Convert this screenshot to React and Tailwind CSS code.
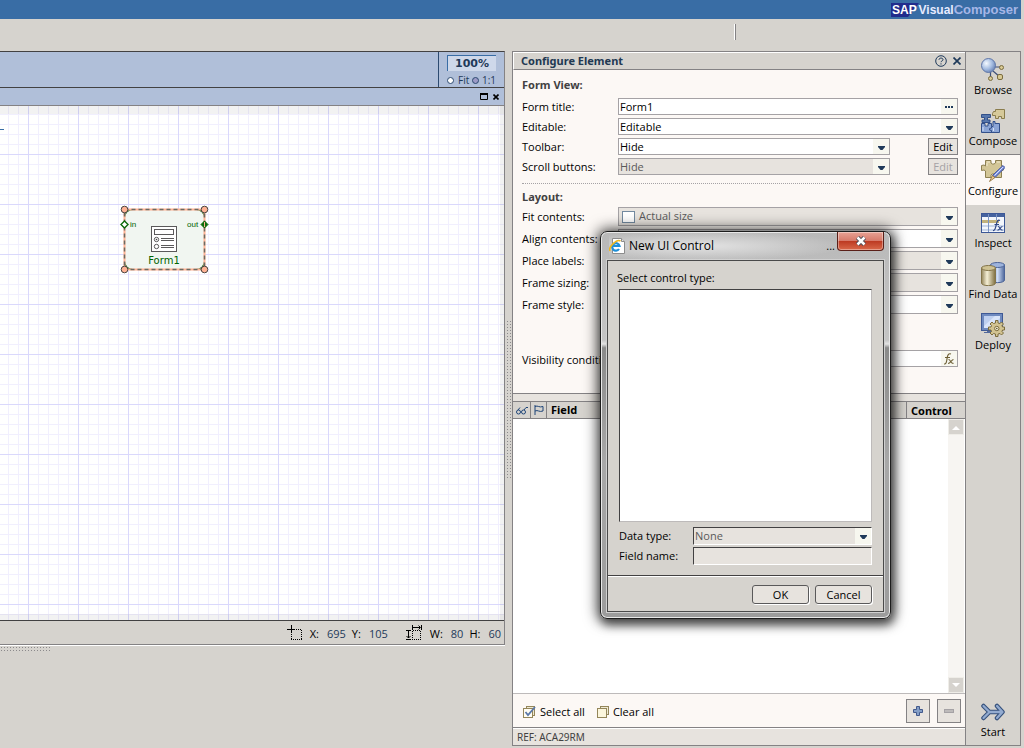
import React, { useState } from "react";
import clsx from "clsx";

const ArrowDown = () => (
  <svg width="7" height="4" viewBox="0 0 7 4" aria-hidden="true">
    <path d="M0 0H7V1L4.500 4H2.500L0 1Z" fill="#1f3a5a" />
  </svg>
);

const BrowseIcon = () => (
  <svg width="24" height="24" viewBox="0 0 24 24" aria-hidden="true">
    <defs>
      <radialGradient id="ball" cx="0.35" cy="0.35" r="0.7">
        <stop offset="0" stopColor="#f4f9ff" />
        <stop offset="0.6" stopColor="#a3bbe0" />
        <stop offset="1" stopColor="#6a83b5" />
      </radialGradient>
    </defs>
    <path d="M14 9H20M12 13L19 19M9.500 14V20" stroke="#3d4f78" strokeWidth="1.200" fill="none" />
    <circle cx="7.500" cy="7.500" r="7" fill="url(#ball)" stroke="#6077a8" />
    <circle cx="20.500" cy="9.500" r="2" fill="#d8c994" stroke="#7a6c3e" />
    <circle cx="9.500" cy="20.500" r="2" fill="#d8c994" stroke="#7a6c3e" />
    <rect x="16.500" y="16.500" width="5" height="5" rx="1.500" fill="#d8c994" stroke="#7a6c3e" />
  </svg>
);

const ComposeIcon = () => (
  <svg width="24" height="24" viewBox="0 0 24 24" aria-hidden="true">
    <path d="M12.500 2.500H14.500V0.500H23.500V9.500H20.500V7.500H17.500V9.500H14.500V6.500H11.500V4.500Z" fill="#d6c99a" stroke="#8a7c4c" />
    <path d="M0.500 5.500H9.500V8.500H6.500V11H9V13.500H1V11H3.500V8.500H0.500Z" fill="#5777ad" stroke="#33508a" />
    <path d="M0.500 14.500H4V17H7V14.500H10.500V17.500H12V12.500H14V14.500H18.500V23.500H0.500Z" fill="#8ba5d6" stroke="#33508a" />
    <path d="M10.500 17.500V19L8.500 19.500V21L10.500 21.500V23.500" fill="none" stroke="#33508a" />
    <path d="M2 18V22M12.500 19V22" stroke="#d6e2f8" />
  </svg>
);

const ConfigureIcon = () => (
  <svg width="24" height="24" viewBox="0 0 24 24" aria-hidden="true">
    <path
      d="M4.500 1.500H10V4L11.500 5H13L14.500 4V1.500H20.500V7L22.500 8V11L20.500 12V18.500H14.500V16L13 15H11L10 16V18.500H4.500V12L3 11L0.500 11.500V6.500L3 6L4.500 7Z"
      fill="#d3c697"
      stroke="#8d8052"
    />
    <path d="M6 3H9M16 3H19M6 4V7" stroke="#f2ead0" />
    <path d="M22 6.500L24 8.500L14 18.500L11.500 16.500Z" fill="#7f95e0" stroke="#3f50a0" />
    <path d="M22 8L13.500 16.500" stroke="#d7e0ff" />
    <path d="M11.500 16.500L14 18.500L8.500 22.500Z" fill="#ecc98a" stroke="#8a6a35" strokeWidth="0.800" />
  </svg>
);

const InspectIcon = () => (
  <svg width="24" height="20" viewBox="0 0 24 20" aria-hidden="true">
    <rect x="0.500" y="0.500" width="23" height="19" fill="#f3f6fc" stroke="#3c5796" />
    <rect x="1" y="1" width="22" height="3" fill="#45629f" />
    <rect x="1" y="7" width="17" height="3" fill="#c2b27c" />
    <rect x="1" y="12" width="22" height="2" fill="#c9d5ea" />
    <rect x="1" y="16" width="22" height="2" fill="#c9d5ea" />
    <path d="M7.500 1V19M15.500 1V7" stroke="#7d95c4" />
    <path d="M12 17.500C14.500 18 14.500 14 15.500 11C16 8 17 6.500 19 7.500M13.500 11.500H18M17 13.500C19 13.500 19 17.500 21.500 17M21.500 13.500C19.500 13.500 19 17.500 16.500 17" stroke="#2f4686" strokeWidth="1.200" fill="none" />
  </svg>
);

const FindDataIcon = () => (
  <svg width="24" height="24" viewBox="0 0 24 24" aria-hidden="true">
    <defs>
      <linearGradient id="blueCan">
        <stop offset="0" stopColor="#7189b8" />
        <stop offset="0.5" stopColor="#cfddf5" />
        <stop offset="1" stopColor="#4d669b" />
      </linearGradient>
      <linearGradient id="tanCan">
        <stop offset="0" stopColor="#93845a" />
        <stop offset="0.4" stopColor="#f5efd6" />
        <stop offset="1" stopColor="#7d6d3e" />
      </linearGradient>
    </defs>
    <path d="M9.500 3V18C9.500 21.500 23.500 21.500 23.500 18V3Z" fill="url(#blueCan)" stroke="#4d6498" />
    <ellipse cx="16.500" cy="3" rx="7" ry="2.500" fill="#9db3dc" stroke="#4d6498" />
    <path d="M0.500 6V21C0.500 24.500 14.500 24.500 14.500 21V6Z" fill="url(#tanCan)" stroke="#83744a" />
    <ellipse cx="7.500" cy="6" rx="7" ry="2.500" fill="#cfc293" stroke="#83744a" />
  </svg>
);

const DeployIcon = () => (
  <svg width="24" height="24" viewBox="0 0 24 24" aria-hidden="true">
    <rect x="0.500" y="0.500" width="21" height="17" fill="#6f8abf" stroke="#3f5995" />
    <rect x="3" y="3" width="16" height="12" fill="#bfd0f0" />
    <path d="M3 13L14 3H19V5L9 15H3Z" fill="#dae5fa" />
    <path d="M6 18H13V20H3V19H6Z" fill="#53699c" />
    <g stroke="#7c6c3c" fill="#d2c391">
      <path d="M14.500 7.500H17V10L19 10.500L20.500 9L22.500 11L21 12.500L21.500 14H23.500V17H21.500L21 18.500L22.500 20L20.500 22L19 20.500L17 21V23.500H14.500V21L12.500 20.500L11 22L9 20L10.500 18.500L10 17H7.500V14H10L10.500 12.500L9 11L11 9L12.500 10.500L14.500 10Z" />
      <circle cx="15.800" cy="15.500" r="2.200" fill="#f0ead0" />
    </g>
    <circle cx="15.800" cy="15.500" r="0.800" fill="#5b5030" />
  </svg>
);

const StartIcon = () => (
  <svg width="24" height="18" viewBox="0 0 24 18" aria-hidden="true">
    <g fill="none" strokeLinecap="round" strokeLinejoin="round">
      <path d="M2.500 3L8.500 9L2.500 15M8.500 9H21M16 3L21.500 9L16 15" stroke="#36517c" strokeWidth="4.500" />
      <path d="M2.500 3L8.500 9L2.500 15M8.500 9H21M16 3L21.500 9L16 15" stroke="#93abd0" strokeWidth="2.300" />
    </g>
  </svg>
);

const FxIcon = () => (
  <svg width="10" height="12" viewBox="0 0 10 12" aria-hidden="true">
    <path d="M0 11C2.500 11.500 2.500 8 3 6C3.500 2 4.500 0 7 1M1 4.500H6M4.500 6.500C6.500 6 6.500 11 9.500 10.300M9.500 6.500C7.500 6.500 6.500 10.500 4 10.500" stroke="#6d5f35" fill="none" strokeWidth="1.100" />
  </svg>
);

const tasks = [
  { name: "Browse", icon: BrowseIcon },
  { name: "Compose", icon: ComposeIcon },
  { name: "Configure", icon: ConfigureIcon },
  { name: "Inspect", icon: InspectIcon },
  { name: "Find Data", icon: FindDataIcon },
  { name: "Deploy", icon: DeployIcon },
];

const TaskButton = ({ name, icon: Icon, active, onClick }) => (
  <button
    type="button"
    onClick={onClick}
    className={clsx(
      "flex h-[51px] w-full flex-col items-center whitespace-nowrap",
      active ? "border-t border-[#848284] bg-[#fcf8f5] pt-[3px]" : "pt-[5px]"
    )}
  >
    <span className="flex h-[25px] items-center">
      <Icon />
    </span>
    <span className="leading-4">{name}</span>
  </button>
);

const FormRow = ({ id, label, tall, children }) => (
  <div className={clsx("flex items-start pt-px", tall ? "h-[22px]" : "h-5")}>
    <label
      htmlFor={id}
      className={clsx("w-24 shrink-0 whitespace-nowrap", tall ? "leading-5" : "leading-[18px]")}
    >
      {label}
    </label>
    {children}
  </div>
);

const SelectBox = ({ id, value, disabled, tall }) => (
  <div
    className={clsx(
      "flex min-w-0 flex-1 border border-[#a5a2a5]",
      tall ? "h-[19px]" : "h-[17px]",
      disabled ? "bg-[#e7e3de] text-[#5a5a5a]" : "bg-white"
    )}
  >
    <div className="relative flex flex-1">
      <select
        id={id}
        disabled={disabled}
        className="w-full appearance-none bg-transparent pl-px leading-[15px] opacity-100 outline-none"
      >
        <option>{value}</option>
      </select>
      <span className="pointer-events-none absolute inset-y-0 right-0 flex w-4 items-center justify-center bg-[#f7f7ef] pt-[3px]">
        <ArrowDown />
      </span>
    </div>
  </div>
);

const EditButton = ({ disabled }) => (
  <button
    type="button"
    disabled={disabled}
    className="ml-[38px] h-[17px] w-[30px] border border-[#848284] bg-[#e7e3de] leading-[15px] disabled:text-[#a5a2a5]"
  >
    Edit
  </button>
);

const FormNode = () => (
  <svg width="92" height="72" viewBox="0 0 92 72" className="absolute top-[98px] left-[119px]">
    <rect x="5.500" y="5.500" width="80" height="60" fill="#fff" />
    <path d="M5 5H15L5 15ZM86 5H76L86 15ZM5 66H15L5 56ZM86 66H76L86 56Z" fill="#1c6b1c" />
    <rect x="6" y="6" width="79" height="59" rx="8" fill="#f1f6f1" />
    <rect x="5.500" y="5.500" width="80" height="60" fill="none" stroke="#ffb294" strokeWidth="2" />
    <rect x="5.500" y="5.500" width="80" height="60" fill="none" stroke="#6b6b63" strokeWidth="1.500" strokeDasharray="4 3" />
    <g fill="#ffb294" stroke="#4a4542">
      <circle cx="5.500" cy="5.500" r="3.300" />
      <circle cx="85.500" cy="5.500" r="3.300" />
      <circle cx="5.500" cy="65.500" r="3.300" />
      <circle cx="85.500" cy="65.500" r="3.300" />
    </g>
    <path d="M5.500 17L9 20.500L5.500 24L2 20.500Z" fill="#fff" stroke="#0a6b0a" strokeWidth="1.400" />
    <path d="M85.500 17L89 20.500L85.500 24L82 20.500Z" fill="#0a6b0a" stroke="#0a6b0a" />
    <path d="M85.500 18V23" stroke="#ffb294" />
    <g fill="#fff" stroke="#5a595a">
      <rect x="32.500" y="22.500" width="25" height="25" />
      <rect x="35.500" y="25.500" width="19" height="5" />
      <circle cx="37.500" cy="35.500" r="2.200" />
      <circle cx="37.500" cy="42.500" r="2.200" />
      <path d="M42 34.500H55M42 36.500H55M42 41.500H55M42 43.500H55" />
    </g>
    <circle cx="37.500" cy="35.500" r="0.800" fill="#444" />
    <g fill="#006300" fontFamily="Liberation Sans, sans-serif">
      <text x="11" y="23" fontSize="8">in</text>
      <text x="68" y="23" fontSize="8">out</text>
      <text x="45" y="60" fontSize="10" textAnchor="middle" fontFamily="DejaVu Sans, sans-serif">
        Form1
      </text>
    </g>
  </svg>
);

const Designer = () => (
  <div className="flex min-w-0 flex-1 flex-col">
    <section className="flex min-h-0 flex-1 flex-col border-t border-r border-[#424142] border-r-[#848284]">
      <div className="flex h-[35px] shrink-0 justify-end bg-[#b0bfd9]">
        <div className="w-[66px] border-l border-[#2c4a70] px-2 pt-[3px] text-[#1f3a5a]">
          <div className="h-4 border-t border-l border-[#396da5] bg-[#ced8ea] text-center text-[11px] leading-[15px] font-bold font-['DejaVu_Sans']">
            100%
          </div>
          <div className="mt-[3px] flex h-3 items-center justify-between text-[10px]">
            <label className="flex items-center gap-1">
              <input type="radio" name="zoom" defaultChecked className="size-[7px] appearance-none rounded-full border border-[#2c4a70] bg-white" />
              Fit
            </label>
            <label className="flex items-center gap-[3px]">
              <input type="radio" name="zoom" className="size-[7px] appearance-none rounded-full border border-[#2c4a70] bg-[#9c9ac6]" />
              1:1
            </label>
          </div>
        </div>
      </div>
      <div className="flex h-[19px] shrink-0 items-center justify-end gap-[5px] border-t border-b border-[#424142] border-b-[#848284] bg-[#b0bfd9] pr-[5px]">
        <button type="button" aria-label="Maximize">
          <svg width="8" height="7" viewBox="0 0 8 7">
            <path d="M0.500 0V6.500H7.500V0M0 1H8" fill="none" stroke="#000" />
            <path d="M0 0H8V2H0Z" />
          </svg>
        </button>
        <button type="button" aria-label="Close">
          <svg width="6" height="6" viewBox="0 0 6 6">
            <path d="M0.500 0.500L5.500 5.500M5.500 0.500L0.500 5.500" stroke="#000" strokeWidth="1.600" />
          </svg>
        </button>
      </div>
      <div className="relative min-h-0 flex-1 overflow-hidden bg-white bg-[linear-gradient(90deg,#dad8fc_1px,transparent_1px),linear-gradient(#dad8fc_1px,transparent_1px),linear-gradient(90deg,#f1effe_1px,transparent_1px),linear-gradient(#f1effe_1px,transparent_1px)] bg-[size:50px_50px,50px_50px,10px_10px,10px_10px] bg-[position:28px_0px,0px_48px,8px_0px,0px_8px] shadow-[inset_-4px_0_0_0_#0000000d,inset_0_8px_0_0_#0000000d,inset_0_-6px_0_0_#0000000d]">
        <span className="absolute top-[23px] left-0 h-px w-1 bg-[#396da5]" />
        <FormNode />
      </div>
      <div className="flex h-[25px] shrink-0 items-center justify-end border-t border-b border-[#424142] border-b-[#848284] pt-1 pr-[3px] whitespace-pre">
        <svg width="15" height="15" viewBox="0 0 15 15" className="mr-2 mb-1" aria-hidden="true">
          <path d="M0 4.500H8M4.500 0V8" stroke="#000" />
          <path d="M9 4.500H15M14.500 5V15M4.500 9V15M4 14.500H15" fill="none" stroke="#000" strokeDasharray="1 1" />
        </svg>
        <span>X:</span>
        <span className="ml-2 text-[#1f3a5a]">695</span>
        <span className="ml-1.5">Y:</span>
        <span className="ml-2 text-[#1f3a5a]">105</span>
        <svg width="16" height="15" viewBox="0 0 16 15" className="mr-2 mb-1 ml-[18px]" aria-hidden="true">
          <path d="M7 2.500H14M6.500 0V5M15.500 0V5M12.500 0.500L14.500 2.500L12.500 4.500M2.500 6V13M0 5.500H5M0 14.500H5M0.500 11L2.500 13L4.500 11" fill="none" stroke="#000" />
          <path d="M7 5.500H15M14.500 6V15M6.500 6V15M6 14.500H15" fill="none" stroke="#000" strokeDasharray="1 1" />
        </svg>
        <span>W:</span>
        <span className="ml-2 text-[#1f3a5a]">80</span>
        <span className="ml-1.5">H:</span>
        <span className="ml-2 text-[#1f3a5a]">60</span>
      </div>
    </section>
    <div className="h-[101px] shrink-0 border-t border-white">
      <div className="h-1.5 w-[50px] bg-[radial-gradient(#8c8a8c_0.8px,transparent_1px)] bg-[size:3px_3px]" />
    </div>
  </div>
);

const ConfigurePanel = () => (
  <section className="flex w-[453px] shrink-0 flex-col border-t border-l border-[#848284]">
    <header className="flex h-[18px] shrink-0 items-center border-t border-b border-l border-white border-b-[#848284] pr-1 pl-[7px]">
      <h1 className="flex-1 font-['Noto_Sans'] font-bold text-[#213852]">Configure Element</h1>
      <button type="button" aria-label="Help" className="mr-1.5">
        <svg width="12" height="12" viewBox="0 0 12 12">
          <circle cx="6" cy="6" r="5.300" fill="none" stroke="#1f3a5a" />
          <path d="M4 4.800C4 2.500 8 2.500 8 4.700C8 6 6 5.800 6 7.200M6 8.300V9.500" fill="none" stroke="#1f3a5a" />
        </svg>
      </button>
      <button type="button" aria-label="Close">
        <svg width="8" height="8" viewBox="0 0 8 8">
          <path d="M0.500 0.500L7.500 7.500M7.500 0.500L0.500 7.500" stroke="#1f3a5a" strokeWidth="1.700" />
        </svg>
      </button>
    </header>

    <div className="shrink-0 bg-[#fcf8f5] pr-[7px] pb-[22px] pl-[9px]">
      <h2 className="h-[27px] pt-[7px] font-['Noto_Sans'] leading-4 font-bold text-[#424142]">Form View:</h2>
      <FormRow id="title" label="Form title:">
        <div className="flex h-[17px] min-w-0 flex-1 border border-[#a5a2a5] bg-white">
          <input id="title" defaultValue="Form1" className="min-w-0 flex-1 pl-px leading-[15px] outline-none" />
          <button type="button" aria-label="More" className="flex w-4 items-center justify-center gap-px bg-[#f7f7ef]">
            <i className="size-0.5 bg-[#1f3a5a]" />
            <i className="size-0.5 bg-[#1f3a5a]" />
            <i className="size-0.5 bg-[#1f3a5a]" />
          </button>
        </div>
      </FormRow>
      <FormRow id="editable" label="Editable:">
        <SelectBox id="editable" value="Editable" />
      </FormRow>
      <FormRow id="toolbar" label="Toolbar:">
        <SelectBox id="toolbar" value="Hide" />
        <EditButton />
      </FormRow>
      <FormRow id="scroll" label="Scroll buttons:">
        <SelectBox id="scroll" value="Hide" disabled />
        <EditButton disabled />
      </FormRow>
      <div className="mt-1.5 -mr-0.5 border-t border-dotted border-[#a5a2a5]" />
      <h2 className="h-[22px] pt-[5px] font-['Noto_Sans'] leading-4 font-bold text-[#424142]">Layout:</h2>
      <FormRow id="fit" label="Fit contents:" tall>
        <div className="flex h-[19px] flex-1 items-center border border-[#a5a2a5] bg-[#e7e3de] pl-[3px] text-[#5a5a5a]">
          <input id="fit" type="checkbox" className="mr-1 h-3 w-[13px] appearance-none border border-[#738aa0] bg-white" />
          <span className="flex-1">Actual size</span>
          <button type="button" aria-label="Open" className="flex h-full w-4 items-center justify-center bg-[#f7f7ef] pt-[3px]">
            <ArrowDown />
          </button>
        </div>
      </FormRow>
      <FormRow id="align" label="Align contents:" tall>
        <SelectBox id="align" value="" tall />
      </FormRow>
      <FormRow id="place" label="Place labels:" tall>
        <SelectBox id="place" value="" tall disabled />
      </FormRow>
      <FormRow id="sizing" label="Frame sizing:" tall>
        <SelectBox id="sizing" value="" tall disabled />
      </FormRow>
      <FormRow id="style" label="Frame style:" tall>
        <SelectBox id="style" value="" tall />
      </FormRow>
      <div className="mt-[33px]">
        <FormRow id="visibility" label="Visibility condition:" tall>
          <div className="flex h-[17px] min-w-0 flex-1 border border-[#a5a2a5] bg-white">
            <input id="visibility" className="min-w-0 flex-1 outline-none" />
            <button type="button" aria-label="Formula" className="flex w-4 items-center justify-center bg-[#f7f7ef]">
              <FxIcon />
            </button>
          </div>
        </FormRow>
      </div>
    </div>

    <div className="h-[9px] shrink-0 border-t border-b border-[#848284] bg-[#e7e3de]" />
    <div className="flex h-[17px] shrink-0 items-center border-b border-[#848284] font-['Noto_Sans'] font-bold">
      <span className="flex h-full w-[18px] items-center justify-center border-r border-[#848284]">
        <svg width="12" height="9" viewBox="0 0 12 9" aria-hidden="true">
          <g fill="none" stroke="#1f4578">
            <circle cx="2.500" cy="6" r="2" />
            <circle cx="7.500" cy="6" r="2" />
            <path d="M2 4L4 1.500M8 4L10 1.500L12 1.500" />
          </g>
        </svg>
      </span>
      <span className="flex h-full w-4 items-center justify-center border-r border-[#848284]">
        <svg width="10" height="10" viewBox="0 0 10 10" aria-hidden="true">
          <path d="M1 0V10M1 1.500C4 0 5 3 9 1.500V6C5 7.500 4 4.500 1 6" fill="none" stroke="#1f4578" />
        </svg>
      </span>
      <span className="flex-1 pl-1 leading-[18px]">Field</span>
      <span className="h-full w-[59px] border-l border-[#848284] pl-1 leading-[18px]">Control</span>
    </div>
    <div className="flex min-h-0 flex-1 justify-end border-b border-[#bdbaba] bg-white">
      <div className="mr-px flex w-4 flex-col justify-between bg-[#f7f5f2]">
        <button type="button" aria-label="Scroll up" className="flex h-4 items-center justify-center border border-[#efede8] bg-[#d6d3ce]">
          <svg width="8" height="5" viewBox="0 0 8 5">
            <path d="M0 5L4 1L8 5Z" fill="#fff" />
          </svg>
        </button>
        <button type="button" aria-label="Scroll down" className="flex h-4 items-center justify-center border border-[#efede8] bg-[#d6d3ce]">
          <svg width="8" height="5" viewBox="0 0 8 5">
            <path d="M0 0L4 4L8 0Z" fill="#fff" />
          </svg>
        </button>
      </div>
    </div>
    <div className="flex h-[34px] shrink-0 items-center border-b border-[#848284] bg-[#fcf8f5] pr-1 pl-2.5">
      <button type="button" className="mr-3 flex items-center gap-1 pt-[3px]">
        <svg width="13" height="13" viewBox="0 0 13 13" aria-hidden="true">
          <rect x="3.500" y="0.500" width="8" height="9" fill="#efe9d3" stroke="#94865a" />
          <rect x="0.500" y="2.500" width="9" height="9" fill="#fffdf4" stroke="#94865a" />
          <path d="M2.500 6L5 9L12 1" fill="none" stroke="#5b78a8" strokeWidth="1.800" />
        </svg>
        Select all
      </button>
      <button type="button" className="flex items-center gap-1 pt-[3px]">
        <svg width="12" height="12" viewBox="0 0 12 12" aria-hidden="true">
          <rect x="3.500" y="0.500" width="8" height="8" fill="#efe9d3" stroke="#94865a" />
          <rect x="0.500" y="2.500" width="9" height="9" fill="#fcf6dd" stroke="#94865a" />
        </svg>
        Clear all
      </button>
      <button type="button" aria-label="Add" className="ml-auto flex size-6 items-center justify-center border border-[#848284] bg-[#e7e3de]">
        <svg width="10" height="10" viewBox="0 0 10 10">
          <path d="M3.500 0.500H6.500V3.500H9.500V6.500H6.500V9.500H3.500V6.500H0.500V3.500H3.500Z" fill="#849ec6" stroke="#42598c" />
        </svg>
      </button>
      <button type="button" aria-label="Remove" className="ml-[7px] flex size-6 items-center justify-center border border-[#848284] bg-[#e7e3de]">
        <svg width="10" height="4" viewBox="0 0 10 4">
          <rect x="0.500" y="0.500" width="9" height="3" fill="#bdbaba" stroke="#a5a2a5" />
        </svg>
      </button>
    </div>
    <div className="h-[18px] shrink-0 border-t border-b border-white border-b-[#848284] bg-[#e7e3de] pl-1 font-['Noto_Sans'] text-[10px] leading-4 text-[#424142]">
      REF: ACA29RM
    </div>
  </section>
);

const NewControlDialog = ({ onClose }) => (
  <div
    role="dialog"
    aria-label="New UI Control"
    className="absolute top-[231px] right-[133px] w-[291px] rounded-[7px] border border-[#1c1c1c] bg-[linear-gradient(#b9b9b9,#c4c4c4_28%,#e4e4e4_29%,#8a8a8a_30%,#a8a8a8_60%,#9c9c9c)] px-1.5 pb-1.5 shadow-[inset_0_0_0_1px_#e8e8e8,0_0_14px_3px_#000000a0,2px_5px_10px_1px_#00000080]"
  >
    <div className="flex h-7 items-start pl-0.5">
      <div className="flex h-7 flex-1 items-center gap-1 bg-[radial-gradient(ellipse_at_40%_50%,#e3e3e3,transparent_75%)]">
        <svg width="16" height="16" viewBox="0 0 16 16" aria-hidden="true">
          <path d="M3.500 0.500H12.500L15.500 3.500V15.500H3.500Z" fill="#fff" stroke="#8c8c8c" />
          <path d="M12.500 0.500V3.500H15.500" fill="#e4e4e4" stroke="#8c8c8c" />
          <path d="M10 11A3.700 3.700 0 1 1 10.500 8H3.500" fill="none" stroke="#1e8fd8" strokeWidth="2.200" />
          <path d="M1 13C-1 9 8 0.500 11.500 3" fill="none" stroke="#f0b81c" strokeWidth="1.600" />
        </svg>
        <span className="flex-1 text-xs">New UI Control</span>
        <span className="pr-0.5">...</span>
      </div>
      <button
        type="button"
        aria-label="Close"
        onClick={onClose}
        className="flex h-[19px] w-[47px] items-center justify-center rounded-b-[4px] border border-t-0 border-[#5a1f18] bg-[linear-gradient(#e8a294,#d77b6b_48%,#bd3a22_52%,#d9694a)] shadow-[inset_0_0_0_1px_#ffffff60]"
      >
        <svg width="12" height="10" viewBox="0 0 12 10">
          <path d="M2.500 1.500L9.500 8.500M9.500 1.500L2.500 8.500" stroke="#4a4a55" strokeWidth="4.400" />
          <path d="M2.500 1.500L9.500 8.500M9.500 1.500L2.500 8.500" stroke="#fff" strokeWidth="2.500" />
        </svg>
      </button>
    </div>
    <div className="border border-[#4a4a4a] bg-[#d6d3ce] shadow-[0_0_0_1px_#d0d0d0]">
      <div className="px-[9px] pt-[9px]">
        <label htmlFor="controls" className="block leading-4">
          Select control type:
        </label>
        <div className="pt-[3px] pr-0.5 pl-0.5">
          <select
            id="controls"
            size="12"
            className="block h-[233px] w-full appearance-none border border-[#424142] border-r-[#bdbaba] border-b-[#bdbaba] bg-white outline-none"
          />
          <div className="mt-1 flex h-5 items-center">
            <label htmlFor="datatype" className="w-[74px]">
              Data type:
            </label>
            <div className="relative flex h-[18px] flex-1 border border-white border-t-[#424142] border-l-[#424142] bg-[#e7e3de]">
              <select id="datatype" disabled className="w-full appearance-none bg-transparent pl-px text-[#5a5a5a] opacity-100">
                <option>None</option>
              </select>
              <span className="pointer-events-none absolute inset-y-0 right-0 flex w-4 items-center justify-center bg-[#f7f7ef] pt-0.5">
                <ArrowDown />
              </span>
            </div>
          </div>
          <div className="flex h-5 items-center">
            <label htmlFor="fieldname" className="w-[74px]">
              Field name:
            </label>
            <input
              id="fieldname"
              disabled
              className="h-[18px] min-w-0 flex-1 border border-white border-t-[#424142] border-l-[#424142] bg-[#e7e3de]"
            />
          </div>
        </div>
      </div>
      <div className="mt-[9px] flex justify-end gap-1.5 border-t border-[#424142] pt-[9px] pr-[11px] pb-[7px] shadow-[inset_0_1px_0_0_#fff]">
        <button type="button" className="h-[19px] w-[57px] rounded-[3px] border border-[#5a595a] bg-[#e7e3de] leading-[17px] shadow-[1px_1px_0_0_#fff]">
          OK
        </button>
        <button
          type="button"
          onClick={onClose}
          className="h-[19px] w-[57px] rounded-[3px] border border-[#5a595a] bg-[#e7e3de] leading-[17px] shadow-[1px_1px_0_0_#fff]"
        >
          Cancel
        </button>
      </div>
    </div>
  </div>
);

const App = () => {
  const [task, setTask] = useState("Configure");
  const [dialogOpen, setDialogOpen] = useState(true);

  return (
    <div className="relative flex h-screen flex-col overflow-hidden bg-[#d6d3ce] pr-[3px] pb-0.5 font-['Open_Sans','Noto_Sans',sans-serif] text-[11px] text-black">
      <header className="flex h-[19px] shrink-0 items-center justify-end bg-[#396da5] pr-[3px]">
        <svg width="28" height="14" viewBox="0 0 28 14" aria-label="SAP">
          <path d="M0 0H28L17 14H0Z" fill="#212c8c" />
          <text x="1" y="11" fontSize="12" fontWeight="bold" fontFamily="Liberation Sans, sans-serif" fill="#fff">
            SAP
          </text>
        </svg>
        <span className="font-['Liberation_Sans',sans-serif] text-xs font-bold text-[#e7ebff]">Visual</span>
        <span className="font-['Liberation_Sans',sans-serif] text-[13px] font-bold text-[#a5b6e7]">Composer</span>
      </header>
      <div className="flex h-8 shrink-0 items-start justify-end pt-[5px] pr-[285px]">
        <span className="h-4 w-0.5 border-r border-l border-white border-r-[#848284]" />
      </div>

      <main className="flex min-h-0 flex-1">
        <Designer />
        <div className="flex w-[7px] shrink-0 items-center justify-end">
          <div className="h-[158px] w-1.5 bg-[radial-gradient(#8c8a8c_0.8px,transparent_1px)] bg-[size:3px_3px]" />
        </div>
        <ConfigurePanel />
        <nav className="flex w-14 shrink-0 flex-col border border-[#848284]">
          {tasks.map((item) => (
            <TaskButton
              key={item.name}
              name={item.name}
              icon={item.icon}
              active={task === item.name}
              onClick={() => setTask(item.name)}
            />
          ))}
          <div className="mt-auto">
            <TaskButton name="Start" icon={StartIcon} onClick={() => setTask("Start")} />
          </div>
        </nav>
      </main>

      {dialogOpen && <NewControlDialog onClose={() => setDialogOpen(false)} />}
    </div>
  );
};

export default App;
